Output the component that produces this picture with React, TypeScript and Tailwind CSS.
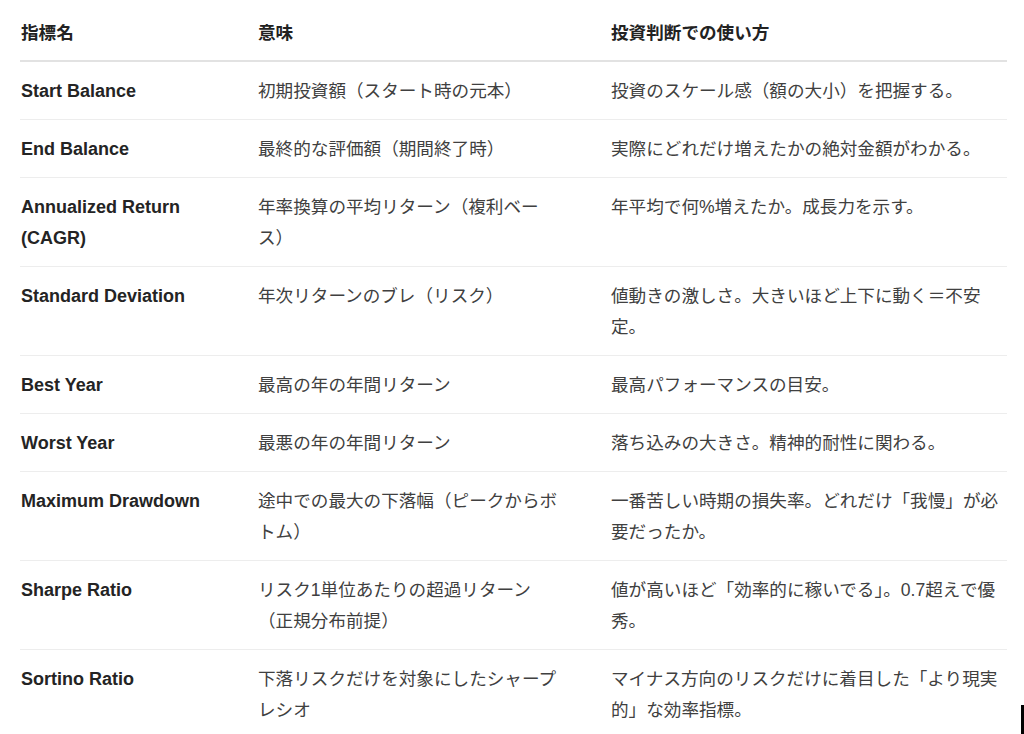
import React from 'react'

type Row = { name: string[]; meaning: string[]; usage: string[] }

const rows: Row[] = [
  { name: ['Start Balance'], meaning: ['初期投資額（スタート時の元本）'], usage: ['投資のスケール感（額の大小）を把握する。'] },
  { name: ['End Balance'], meaning: ['最終的な評価額（期間終了時）'], usage: ['実際にどれだけ増えたかの絶対金額がわかる。'] },
  { name: ['Annualized Return', '(CAGR)'], meaning: ['年率換算の平均リターン（複利ベー', 'ス）'], usage: ['年平均で何%増えたか。成長力を示す。'] },
  { name: ['Standard Deviation'], meaning: ['年次リターンのブレ（リスク）'], usage: ['値動きの激しさ。大きいほど上下に動く＝不安', '定。'] },
  { name: ['Best Year'], meaning: ['最高の年の年間リターン'], usage: ['最高パフォーマンスの目安。'] },
  { name: ['Worst Year'], meaning: ['最悪の年の年間リターン'], usage: ['落ち込みの大きさ。精神的耐性に関わる。'] },
  { name: ['Maximum Drawdown'], meaning: ['途中での最大の下落幅（ピークからボ', 'トム）'], usage: ['一番苦しい時期の損失率。どれだけ「我慢」が必', '要だったか。'] },
  { name: ['Sharpe Ratio'], meaning: ['リスク1単位あたりの超過リターン', '（正規分布前提）'], usage: ['値が高いほど「効率的に稼いでる」。0.7超えで優', '秀。'] },
  { name: ['Sortino Ratio'], meaning: ['下落リスクだけを対象にしたシャープ', 'レシオ'], usage: ['マイナス方向のリスクだけに着目した「より現実', '的」な効率指標。'] },
]

const Lines = ({ lines }: { lines: string[] }) => (
  <>
    {lines.map((l, i) => (
      <div key={i} className="whitespace-nowrap">{l}</div>
    ))}
  </>
)

export default function App() {
  return (
    <div className="relative h-[734px] overflow-hidden bg-white font-['Liberation_Sans','Noto_Sans_CJK_JP',sans-serif]">
      <div className="ml-[20px] w-[987px]">
        <div className="grid grid-cols-[238px_353px_1fr] border-b-2 border-[#e2e2e2] pt-[18px] pb-[11px] text-[17.6px] leading-[31px] font-bold text-[#222]">
          <div className="pl-[1px]">指標名</div>
          <div>意味</div>
          <div>投資判断での使い方</div>
        </div>

        {rows.map(r => (
          <div key={r.name[0]} className="grid grid-cols-[238px_353px_1fr] border-b border-[#ededed] pt-[14px] pb-[12px] leading-[31px]">
            <div className="pl-[1px] text-[18px] font-bold text-[#242424]">
              <Lines lines={r.name} />
            </div>
            <div className="text-[17.6px] text-[#404040]">
              <Lines lines={r.meaning} />
            </div>
            <div className="text-[17.6px] text-[#404040]">
              <Lines lines={r.usage} />
            </div>
          </div>
        ))}
      </div>

      <div className="absolute right-0 bottom-0 h-[29px] w-[3px] bg-black" />
    </div>
  )
}
